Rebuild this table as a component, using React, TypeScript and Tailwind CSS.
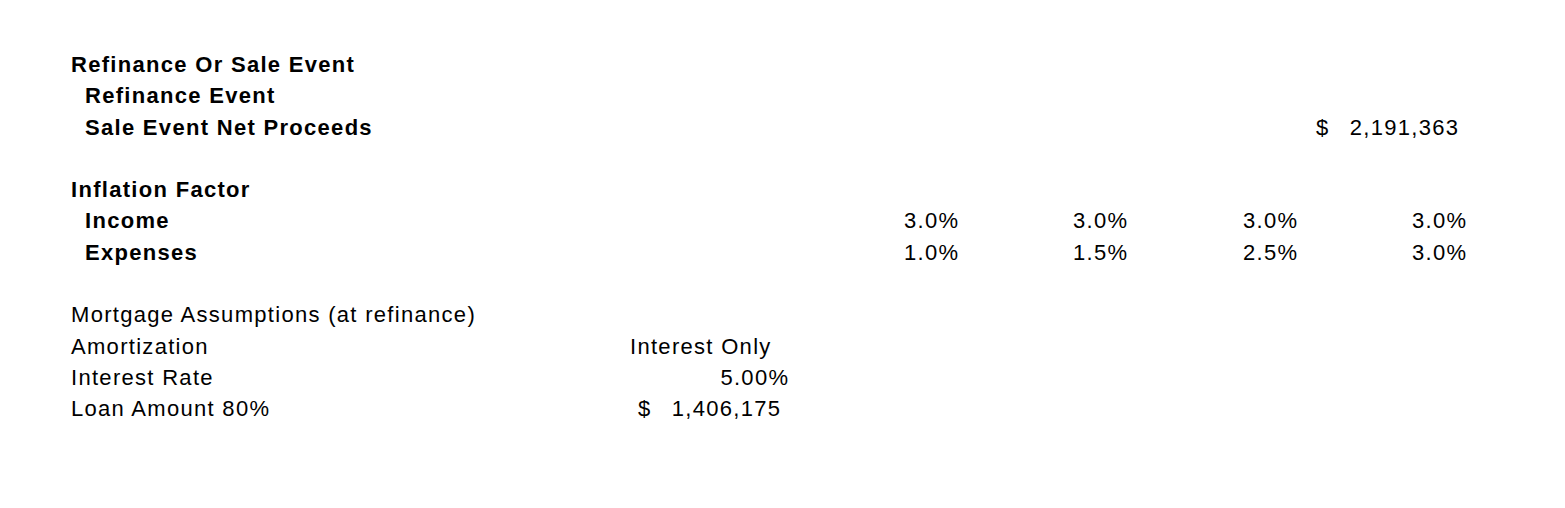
import React from "react";

type Cell = React.ReactNode;

const Row = ({ label, bold, indent, cells }: { label?: string; bold?: boolean; indent?: boolean; cells?: Cell[] }) => (
  <div className="grid h-[31.27px] grid-cols-[548px_169px_170px_169px_170px_169px] items-center leading-[31px]">
    <div className={`${bold ? "font-bold" : "font-normal"} ${indent ? "pl-[14px]" : ""} whitespace-nowrap`}>{label}</div>
    {(cells ?? [null, null, null, null, null]).map((c, i) => (
      <div key={i} className="whitespace-nowrap">{c}</div>
    ))}
  </div>
);

const Pct = ({ v }: { v: string }) => <div className="mr-[-1.3px] text-right">{v}</div>;
const Acct = ({ v }: { v: string }) => (
  <div className="flex justify-between pl-[19px] pr-[6.7px]">
    <span>$</span>
    <span>{v}</span>
  </div>
);

export default function App() {
  return (
    <div className="min-h-[508px] w-[1565px] bg-white pl-[71px] pt-[49px] text-[22px] tracking-[1.3px] text-black [font-family:'Liberation_Sans',Arial,sans-serif]">
      <Row label="Refinance Or Sale Event" bold />
      <Row label="Refinance Event" bold indent />
      <Row label="Sale Event Net Proceeds" bold indent cells={[null, null, null, null, <Acct v="2,191,363" />]} />
      <Row />
      <Row label="Inflation Factor" bold />
      <Row label="Income" bold indent cells={[null, <Pct v="3.0%" />, <Pct v="3.0%" />, <Pct v="3.0%" />, <Pct v="3.0%" />]} />
      <Row label="Expenses" bold indent cells={[null, <Pct v="1.0%" />, <Pct v="1.5%" />, <Pct v="2.5%" />, <Pct v="3.0%" />]} />
      <Row />
      <Row label="Mortgage Assumptions (at refinance)" />
      <Row label="Amortization" cells={[<div className="pl-[11px]">Interest Only</div>, null, null, null, null]} />
      <Row label="Interest Rate" cells={[<Pct v="5.00%" />, null, null, null, null]} />
      <Row label="Loan Amount 80%" cells={[<Acct v="1,406,175" />, null, null, null, null]} />
    </div>
  );
}
